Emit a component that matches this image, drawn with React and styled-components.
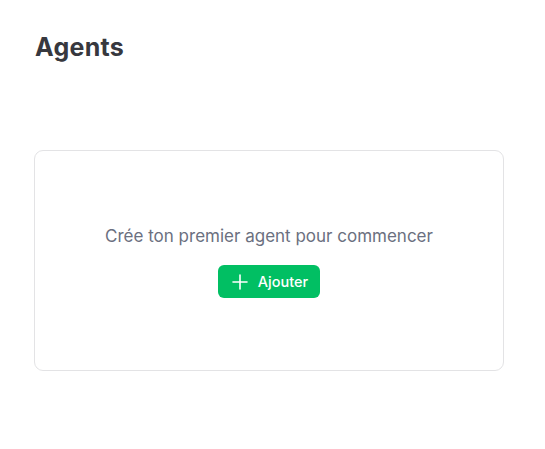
import React from "react";
import styled, { createGlobalStyle } from "styled-components";

const GlobalStyle = createGlobalStyle`
  body {
    margin: 0;
    background: #fff;
    font-family: "Inter", "Liberation Sans", sans-serif;
  }
`;

function PlusIcon() {
  return (
    <svg width="16" height="16" viewBox="0 0 16 16" fill="none">
      <path d="M8 1v14M1 8h14" stroke="#fff" strokeWidth="1.6" strokeLinecap="round" />
    </svg>
  );
}

export default function App() {
  return (
    <Page>
      <GlobalStyle />
      <Title>Agents</Title>
      <EmptyCard>
        <Message>Crée ton premier agent pour commencer</Message>
        <AddButton>
          <PlusIcon />
          Ajouter
        </AddButton>
      </EmptyCard>
    </Page>
  );
}

const Page = styled.div`
  padding: 30px 41px 0 34px;
  display: flex;
  flex-direction: column;
`;

const Title = styled.h1`
  margin: 0;
  font-size: 25px;
  line-height: 34px;
  font-weight: 700;
  letter-spacing: 0.3px;
  color: #37383e;
  padding-left: 1px;
`;

const EmptyCard = styled.div`
  margin-top: 86px;
  height: 221px;
  box-sizing: border-box;
  border: 1px solid #e3e3e5;
  border-radius: 9px;
  display: flex;
  flex-direction: column;
  align-items: center;
  justify-content: center;
  gap: 18px;
  padding-top: 2px;
`;

const Message = styled.p`
  margin: 0;
  font-size: 17px;
  line-height: 22px;
  color: #6b7080;
`;

const AddButton = styled.button`
  display: flex;
  align-items: center;
  gap: 10px;
  height: 33px;
  padding: 0 12px 0 14px;
  border: none;
  border-radius: 6px;
  background: #01bf63;
  color: #fff;
  font-family: inherit;
  font-size: 14.5px;
  font-weight: 500;
  cursor: pointer;
`;
